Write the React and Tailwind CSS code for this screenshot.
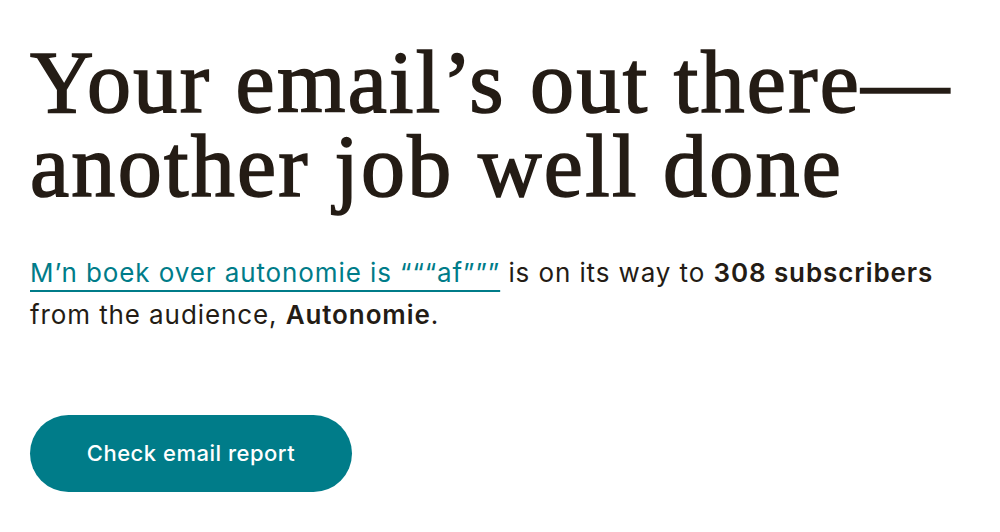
export default function App() {
  return (
    <div className="min-h-screen bg-white px-[30px] pt-[41px]">
      <h1 className="font-['Liberation_Serif',serif] text-[88px] font-normal leading-[84px] tracking-[2.3px] text-[#241c15] [-webkit-text-stroke:1.6px_#241c15]">
        Your email’s out there—
        <br />
        another job well done
      </h1>

      <p className="mt-[43px] font-['Inter',sans-serif] text-[26px] leading-[42px] tracking-[0.9px] text-[#241c15]">
        <a href="#" className="text-[#007c89] underline decoration-2 underline-offset-[8px]">
          M’n boek over autonomie is “““af”””
        </a>{' '}
        is on its way to <span className="font-semibold">308 subscribers</span>
        <br />
        from the audience, <span className="font-semibold">Autonomie</span>.
      </p>

      <button className="mt-[79px] flex h-[77px] w-[322px] items-center justify-center rounded-full bg-[#007c89] font-['Inter',sans-serif] text-[22px] font-medium tracking-[0.5px] text-white">
        Check email report
      </button>
    </div>
  );
}
